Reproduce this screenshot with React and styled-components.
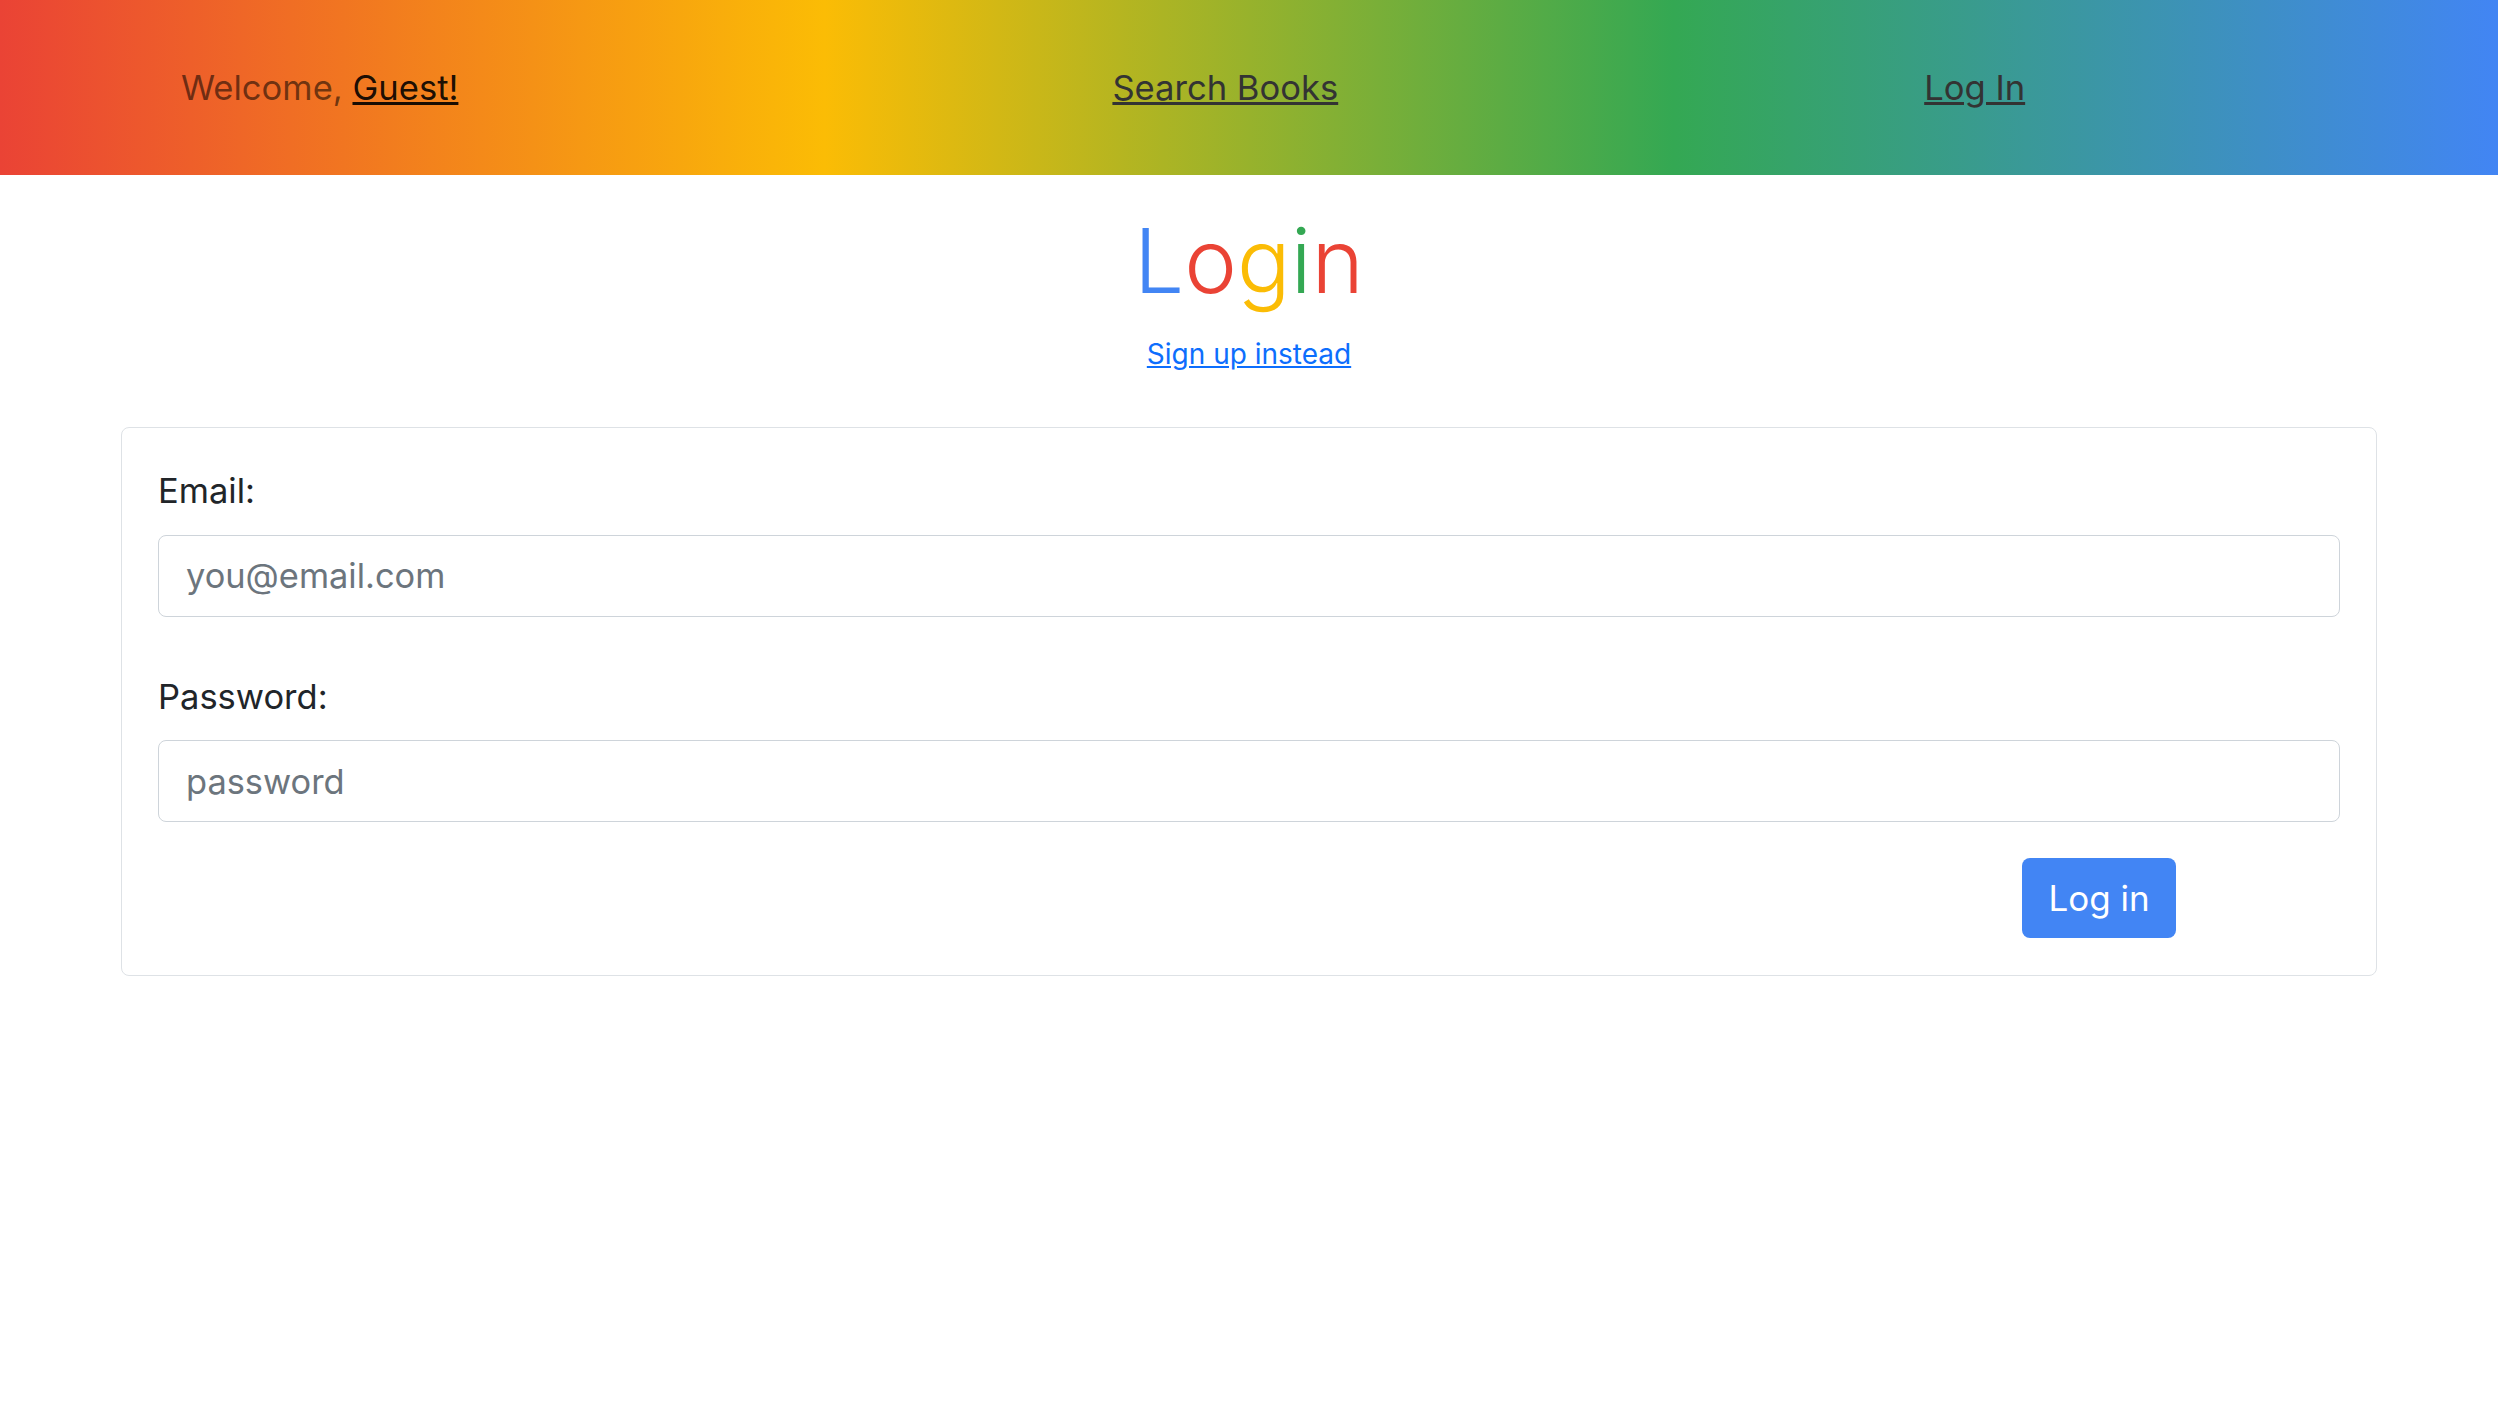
import React from "react";
import styled, { createGlobalStyle } from "styled-components";

const Global = createGlobalStyle`
  html, body { margin: 0; padding: 0; background: #fff; }
  body { font-family: Inter, "Noto Sans", sans-serif; color: #212529; }
  * { box-sizing: border-box; }
`;

const Header = styled.header`
  height: 175px;
  display: flex;
  align-items: center;
  padding-left: 181px;
  background: linear-gradient(to right, #ea4335 0%, #fbbc05 33%, #34a853 67%, #4285f4 100%);
  font-family: Inter, sans-serif;
  font-size: 34.6px;
  line-height: 1.5;
`;

const Welcome = styled.span`
  color: rgba(0, 0, 0, 0.55);
`;

const GuestLink = styled.a`
  color: rgba(0, 0, 0, 0.9);
  text-decoration: underline;
`;

const NavLink = styled.a`
  margin-left: ${(p) => p.$offset}px;
  color: #333;
  text-decoration: underline;
`;

const Main = styled.main`
  display: flex;
  flex-direction: column;
  align-items: center;
  padding: 33px 121px 0;
`;

const Title = styled.h1`
  margin: 0;
  font-size: 89px;
  font-weight: 300;
  line-height: 1.2;
  letter-spacing: 0;
`;

const Letter = styled.span`
  color: ${(p) => p.$c};
`;

const SignUp = styled.a`
  margin-top: 18px;
  font-size: 28px;
  line-height: 1.5;
  color: #0d6efd;
  text-decoration: underline;
`;

const Card = styled.form`
  align-self: stretch;
  margin-top: 52px;
  border: 1px solid #dee2e6;
  border-radius: 8px;
  padding: 37px 36px 37px;
  display: flex;
  flex-direction: column;
`;

const Label = styled.label`
  font-size: 34.5px;
  line-height: 1.5;
  color: #212529;
  margin-top: ${(p) => p.$top || 0}px;
`;

const Input = styled.input`
  margin-top: 18px;
  height: 82px;
  width: 100%;
  border: 1px solid #ced4da;
  border-radius: 8px;
  padding: 0 27px;
  font-family: Inter, sans-serif;
  font-size: 34.4px;
  color: #212529;
  background: #fff;
  outline: none;
  &::placeholder { color: #6c757d; }
`;

const Actions = styled.div`
  display: flex;
  justify-content: flex-end;
  padding-right: 164px;
  margin-top: 36px;
`;

const Button = styled.button`
  width: 154px;
  height: 80px;
  border: none;
  border-radius: 8px;
  background: #4285f4;
  color: #fff;
  font-family: Inter, sans-serif;
  font-size: 35px;
  line-height: 1;
  cursor: pointer;
`;

export default function App() {
  return (
    <>
      <Global />
      <Header>
        <Welcome>
          Welcome, <GuestLink href="#">Guest!</GuestLink>
        </Welcome>
        <NavLink href="#" $offset={654}>Search Books</NavLink>
        <NavLink href="#" $offset={586}>Log In</NavLink>
      </Header>
      <Main>
        <Title>
          <Letter $c="#4285f4">L</Letter>
          <Letter $c="#ea4335">o</Letter>
          <Letter $c="#fbbc05">g</Letter>
          <Letter $c="#34a853">i</Letter>
          <Letter $c="#ea4335">n</Letter>
        </Title>
        <SignUp href="#">Sign up instead</SignUp>
        <Card onSubmit={(e) => e.preventDefault()}>
          <Label htmlFor="email">Email:</Label>
          <Input id="email" type="email" placeholder="you@email.com" />
          <Label htmlFor="password" $top={54}>Password:</Label>
          <Input id="password" type="password" placeholder="password" />
          <Actions>
            <Button type="submit">Log in</Button>
          </Actions>
        </Card>
      </Main>
    </>
  );
}
